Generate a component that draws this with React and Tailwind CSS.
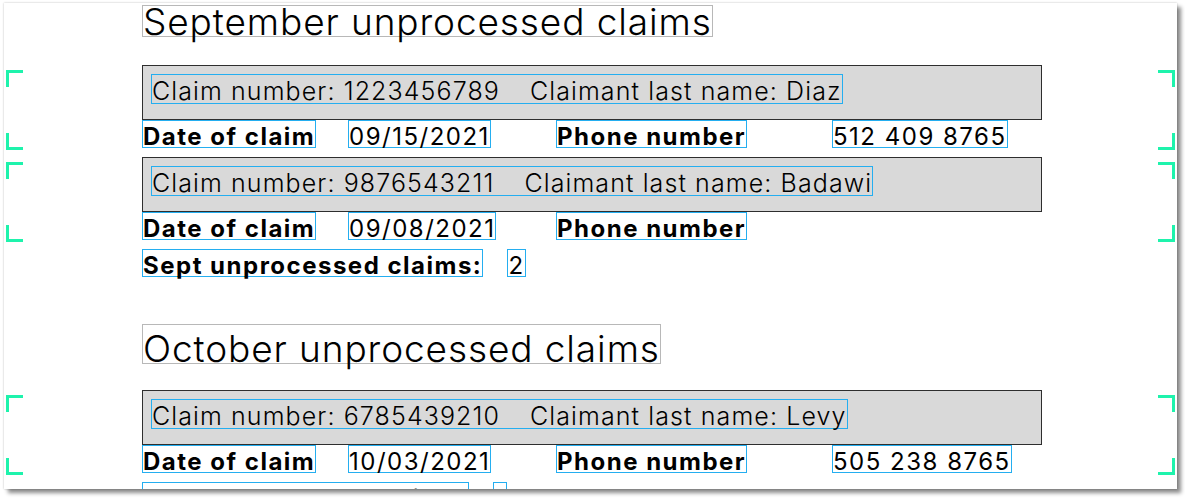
import React from "react";

const sections = [
  {
    title: "September unprocessed claims",
    short: true,
    totalLabel: "Sept unprocessed claims:",
    total: "2",
    claims: [
      { number: "1223456789", name: "Diaz", date: "09/15/2021", phone: "512 409 8765" },
      { number: "9876543211", name: "Badawi", date: "09/08/2021", phone: "" },
    ],
  },
  {
    title: "October unprocessed claims",
    totalLabel: "Oct unprocessed claims:",
    total: "1",
    claims: [{ number: "6785439210", name: "Levy", date: "10/03/2021", phone: "505 238 8765" }],
  },
];

function Field({ children, bold }) {
  return (
    <div
      className={`h-[28px] w-fit border border-[#24aef0] pt-[4px] text-[24px] leading-none tracking-[1.5px] whitespace-nowrap text-black ${
        bold ? "font-bold" : "font-normal"
      }`}
    >
      {children}
    </div>
  );
}

function Brackets() {
  return (
    <>
      <div className="absolute left-[2px] top-[5px] w-[17px] h-[17px] border-l-[3px] border-t-[3px] border-[#1ef3ac]" />
      <div className="absolute left-[2px] bottom-[-2px] w-[17px] h-[17px] border-l-[3px] border-b-[3px] border-[#1ef3ac]" />
      <div className="absolute right-[2px] top-[5px] w-[17px] h-[17px] border-r-[3px] border-t-[3px] border-[#1ef3ac]" />
      <div className="absolute right-[2px] bottom-[-2px] w-[17px] h-[17px] border-r-[3px] border-b-[3px] border-[#1ef3ac]" />
    </>
  );
}

function Claim({ claim, first }) {
  return (
    <div className={`relative pl-[138px] ${first ? "" : "mt-[9px]"}`}>
      <Brackets />
      {/* group header */}
      <div className="w-[900px] h-[55px] border border-[#2e2e2e] bg-[#d9d9d9] pt-[8px] pl-[8px]">
        <div className="h-[30px] w-fit border border-[#24aef0] pt-[4px] flex gap-[30px] text-[25px] leading-none tracking-[1.1px] whitespace-nowrap font-light text-black">
          <span>Claim number: {claim.number}</span>
          <span>Claimant last name: {claim.name}</span>
        </div>
      </div>
      {/* detail */}
      <div className="grid grid-cols-[206px_208px_276px_1fr] h-[28px]">
        <Field bold>Date of claim</Field>
        <Field>{claim.date}</Field>
        <Field bold>Phone number</Field>
        <div>{claim.phone && <Field>{claim.phone}</Field>}</div>
      </div>
    </div>
  );
}

function Section({ s, first }) {
  return (
    <div className={first ? "mt-[2px]" : "mt-[47px]"}>
      <div className="pl-[138px]">
        {s.short ? (
          <div className="h-[32px] w-fit border border-[#b8b8b8] text-[37px] leading-none tracking-[0.9px] font-light whitespace-nowrap text-black">
            <div className="-mt-[3px]">{s.title}</div>
          </div>
        ) : (
          <div className="h-[40px] w-fit border border-[#b8b8b8] pt-[5px] text-[37px] leading-none tracking-[0.9px] font-light whitespace-nowrap text-black">
            {s.title}
          </div>
        )}
      </div>
      <div className={s.short ? "mt-[28px]" : "mt-[26px]"}>
        {s.claims.map((c, i) => (
          <Claim key={c.number} claim={c} first={i === 0} />
        ))}
      </div>
      <div className="pl-[138px] mt-[9px] flex gap-[24px]">
        <Field bold>{s.totalLabel}</Field>
        <Field>{s.total}</Field>
      </div>
    </div>
  );
}

export default function App() {
  return (
    <div className="w-[1185px] h-[498px] bg-white pt-[3px] pl-[4px] font-['Inter',sans-serif]">
      <div className="w-[1173px] h-[486px] overflow-hidden bg-white shadow-[0_0_2px_rgba(0,0,0,0.25),4px_4px_4px_rgba(0,0,0,0.45)]">
        {sections.map((s, i) => (
          <Section key={s.title} s={s} first={i === 0} />
        ))}
      </div>
    </div>
  );
}
